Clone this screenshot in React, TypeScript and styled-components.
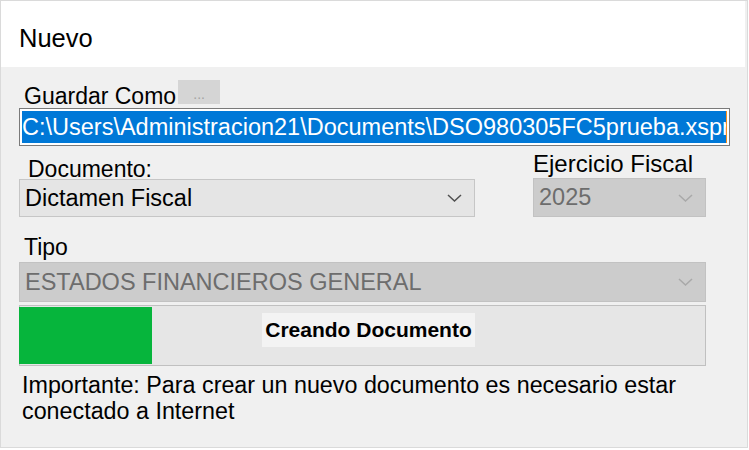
import styled, { createGlobalStyle } from "styled-components";

const Global = createGlobalStyle`
  body {
    margin: 0;
    background: #ffffff;
    font-family: "Liberation Sans", Arial, sans-serif;
    color: #000000;
  }
`;

const Window = styled.div`
  width: 748px;
  height: 448px;
  box-sizing: border-box;
  border: 1px solid #dadada;
  background: #f0f0f0;
  display: flex;
  flex-direction: column;
`;

const Header = styled.div`
  height: 66px;
  box-sizing: border-box;
  margin-right: 2px;
  padding: 23px 0 0 18px;
  background: #ffffff;
  font-size: 25.5px;
`;

const Body = styled.div`
  display: flex;
  flex-direction: column;
  padding: 13px 0 0 18px;
`;

const SaveRow = styled.div`
  display: flex;
  align-items: flex-start;
`;

const SaveLabel = styled.div`
  font-size: 23px;
  line-height: 24px;
  margin: 4px 0 0 5px;
`;

const BrowseButton = styled.div`
  width: 42px;
  height: 24px;
  margin-left: 2px;
  background: #d5d5d5;
  color: #a3a3a3;
  font-size: 14px;
  line-height: 20px;
  display: flex;
  align-items: flex-end;
  justify-content: center;
`;

const PathBox = styled.div`
  width: 711px;
  height: 38px;
  box-sizing: border-box;
  border: 1px solid #7a7a7a;
  background: #ffffff;
  padding: 2px;
  overflow: hidden;
`;

const Selection = styled.div`
  height: 100%;
  box-sizing: border-box;
  background: #0078d7;
  color: #ffffff;
  font-size: 23.5px;
  line-height: 32px;
  white-space: nowrap;
  overflow: hidden;
  border-right: 1px solid #f7901e;
`;

const FieldsRow = styled.div`
  display: grid;
  grid-template-columns: 456px 173px;
  column-gap: 58px;
  align-items: end;
  margin-top: 8px;
`;

const Field = styled.div`
  display: flex;
  flex-direction: column;
`;

const Label = styled.div<{ $indent: number; $gap?: number; $top?: number; $size?: number }>`
  font-size: ${(p) => p.$size ?? 23}px;
  line-height: 20px;
  margin-left: ${(p) => p.$indent}px;
  margin-bottom: ${(p) => p.$gap ?? 0}px;
  margin-top: ${(p) => p.$top ?? 0}px;
`;

const Combo = styled.div<{ $disabled?: boolean; $h: number; $w?: number }>`
  height: ${(p) => p.$h}px;
  width: ${(p) => (p.$w ? `${p.$w}px` : "auto")};
  box-sizing: border-box;
  border: 1px solid ${(p) => (p.$disabled ? "#c2c2c2" : "#c6c6c6")};
  background: ${(p) => (p.$disabled ? "#cccccc" : "#e5e5e5")};
  color: ${(p) => (p.$disabled ? "#6d6d6d" : "#000000")};
  font-size: 23.5px;
  display: flex;
  align-items: center;
  justify-content: space-between;
  padding: 0 12px 0 5px;
  white-space: nowrap;
`;

const Progress = styled.div`
  margin-top: 3px;
  width: 687px;
  height: 61px;
  box-sizing: border-box;
  border: 1px solid #c0c0c0;
  background: #e6e6e6;
  padding: 1px 0;
  display: grid;
`;

const ProgressFill = styled.div<{ $w: number }>`
  grid-area: 1 / 1;
  justify-self: start;
  width: ${(p) => p.$w}px;
  margin-left: -1px;
  background: #06b53c;
`;

const ProgressText = styled.div`
  grid-area: 1 / 1;
  justify-self: center;
  align-self: start;
  margin: 6px 0 0 12px;
  height: 34px;
  line-height: 34px;
  padding: 0 3px;
  background: #f3f3f3;
  font-size: 21px;
  font-weight: bold;
`;

const Note = styled.p`
  margin: 6px 0 0;
  width: 687px;
  box-sizing: border-box;
  padding-left: 3px;
  font-size: 23.3px;
  line-height: 26px;
`;

const Chevron = ({ color }: { color: string }) => (
  <svg width="15" height="8" viewBox="0 0 15 8">
    <polyline points="1,1 7.5,7 14,1" fill="none" stroke={color} strokeWidth="1.5" />
  </svg>
);

export default function App() {
  return (
    <>
      <Global />
      <Window>
        <Header>Nuevo</Header>
        <Body>
          <SaveRow>
            <SaveLabel>Guardar Como</SaveLabel>
            <BrowseButton>...</BrowseButton>
          </SaveRow>
          <PathBox>
            <Selection>C:\Users\Administracion21\Documents\DSO980305FC5prueba.xspr</Selection>
          </PathBox>
          <FieldsRow>
            <Field>
              <Label $indent={9}>Documento:</Label>
              <Combo $h={38}>
                Dictamen Fiscal
                <Chevron color="#505050" />
              </Combo>
            </Field>
            <Field>
              <Label $indent={0} $gap={4} $size={24}>Ejercicio Fiscal</Label>
              <Combo $h={39} $disabled>
                2025
                <Chevron color="#a9a9a9" />
              </Combo>
            </Field>
          </FieldsRow>
          <Label $indent={5} $gap={5} $top={20}>Tipo</Label>
          <Combo $h={40} $w={687} $disabled>
            ESTADOS FINANCIEROS GENERAL
            <Chevron color="#a9a9a9" />
          </Combo>
          <Progress>
            <ProgressFill $w={133} />
            <ProgressText>Creando Documento</ProgressText>
          </Progress>
          <Note>Importante: Para crear un nuevo documento es necesario estar conectado a Internet</Note>
        </Body>
      </Window>
    </>
  );
}
